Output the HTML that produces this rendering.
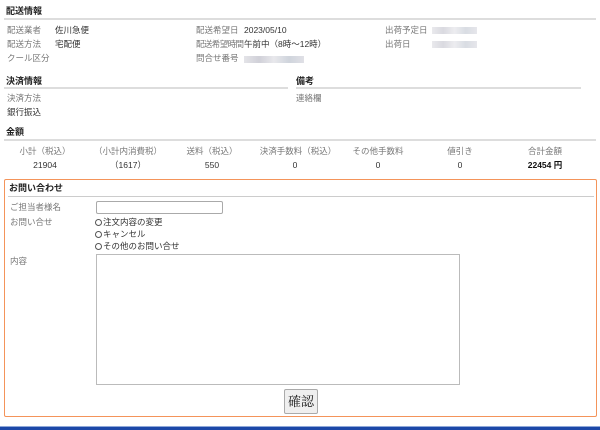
<!DOCTYPE html>
<html><head><meta charset="utf-8"><style>
*{margin:0;padding:0;box-sizing:border-box}
body{width:600px;height:430px;position:relative;background:#fff;font-family:"Liberation Sans","Noto Sans CJK JP",sans-serif;font-size:8.5px;color:#333;overflow:hidden}
.a{position:absolute;white-space:nowrap;line-height:11px}
.h{font-weight:bold;color:#222;font-size:9px}
.l{color:#777}
.hr{position:absolute;height:2px;background:#ddd}
.blur{position:absolute;height:7px;background:linear-gradient(90deg,#e4e4e8,#d0d0d8,#e8e8ec,#cfd4dc,#e0e0e6);}
.c{position:absolute;width:80px;text-align:center;line-height:11px}
.r{display:inline-block;width:7px;height:7px;border:1px solid #555;border-radius:50%;margin-right:1px;vertical-align:-1px}
</style></head><body>
<div class="a h" style="left:6px;top:6px">配送情報</div>
<div class="hr" style="left:4px;top:18px;width:592px"></div>
<div class="a l" style="left:7px;top:25px">配送業者</div><div class="a" style="left:55px;top:25px">佐川急便</div>
<div class="a l" style="left:7px;top:39px">配送方法</div><div class="a" style="left:55px;top:39px">宅配便</div>
<div class="a l" style="left:7px;top:53px">クール区分</div>
<div class="a l" style="left:196px;top:25px">配送希望日</div><div class="a" style="left:244px;top:25px">2023/05/10</div>
<div class="a l" style="left:196px;top:39px;letter-spacing:-0.6px">配送希望時間</div><div class="a" style="left:244px;top:39px">午前中（8時～12時）</div>
<div class="a l" style="left:196px;top:53px">問合せ番号</div><div class="blur" style="left:244px;top:56px;width:60px"></div>
<div class="a l" style="left:385px;top:25px">出荷予定日</div><div class="blur" style="left:432px;top:27px;width:45px;opacity:.8"></div>
<div class="a l" style="left:385px;top:39px">出荷日</div><div class="blur" style="left:432px;top:41px;width:45px;opacity:.8"></div>
<div class="a h" style="left:6px;top:76px">決済情報</div>
<div class="hr" style="left:4px;top:87px;width:284px"></div>
<div class="a h" style="left:296px;top:76px">備考</div>
<div class="hr" style="left:296px;top:87px;width:285px"></div>
<div class="a l" style="left:7px;top:93px">決済方法</div>
<div class="a l" style="left:296px;top:93px">連絡欄</div>
<div class="a" style="left:7px;top:107px">銀行振込</div>
<div class="a h" style="left:6px;top:127px">金額</div>
<div class="hr" style="left:4px;top:139px;width:592px"></div>
<div class="c l" style="left:5px;top:146px">小計（税込）</div><div class="c" style="left:5px;top:160px">21904</div>
<div class="c l" style="left:88px;top:146px">（小計内消費税）</div><div class="c" style="left:88px;top:160px">（1617）</div>
<div class="c l" style="left:172px;top:146px">送料（税込）</div><div class="c" style="left:172px;top:160px">550</div>
<div class="c l" style="left:258px;top:146px">決済手数料（税込）</div><div class="c" style="left:255px;top:160px">0</div>
<div class="c l" style="left:338px;top:146px">その他手数料</div><div class="c" style="left:338px;top:160px">0</div>
<div class="c l" style="left:420px;top:146px">値引き</div><div class="c" style="left:420px;top:160px">0</div>
<div class="c l" style="left:505px;top:146px">合計金額</div><div class="c" style="left:505px;top:160px;font-weight:bold;color:#111">22454 円</div>
<div style="position:absolute;left:4px;top:179px;width:593px;height:238px;border:1.5px solid #f4945a;border-radius:2px"></div>
<div class="a h" style="left:9px;top:183px">お問い合わせ</div>
<div class="hr" style="left:8px;top:196px;width:586px;height:1px;background:#ccc"></div>
<div class="a l" style="left:10px;top:202px">ご担当者様名</div>
<div style="position:absolute;left:96px;top:201px;width:127px;height:13px;border:1px solid #aaa;border-radius:2px"></div>
<div class="a l" style="left:10px;top:217px">お問い合せ</div>
<div class="a" style="left:95px;top:217px"><span class="r"></span>注文内容の変更</div>
<div class="a" style="left:95px;top:229px"><span class="r"></span>キャンセル</div>
<div class="a" style="left:95px;top:241px"><span class="r"></span>その他のお問い合せ</div>
<div class="a l" style="left:10px;top:256px">内容</div>
<div style="position:absolute;left:96px;top:254px;width:364px;height:131px;border:1px solid #bbb"></div>
<div style="position:absolute;left:284px;top:389px;width:34px;height:25px;border:1px solid #aaa;border-radius:2px;background:#efefef;font-family:'Liberation Serif','Noto Serif CJK SC',serif;font-size:13px;text-align:center;line-height:23px;color:#111">確認</div>
<div style="position:absolute;left:0;top:426px;width:600px;height:1px;background:#8fa8d8"></div>
<div style="position:absolute;left:0;top:427px;width:600px;height:3px;background:#1c48a8"></div>
</body></html>
